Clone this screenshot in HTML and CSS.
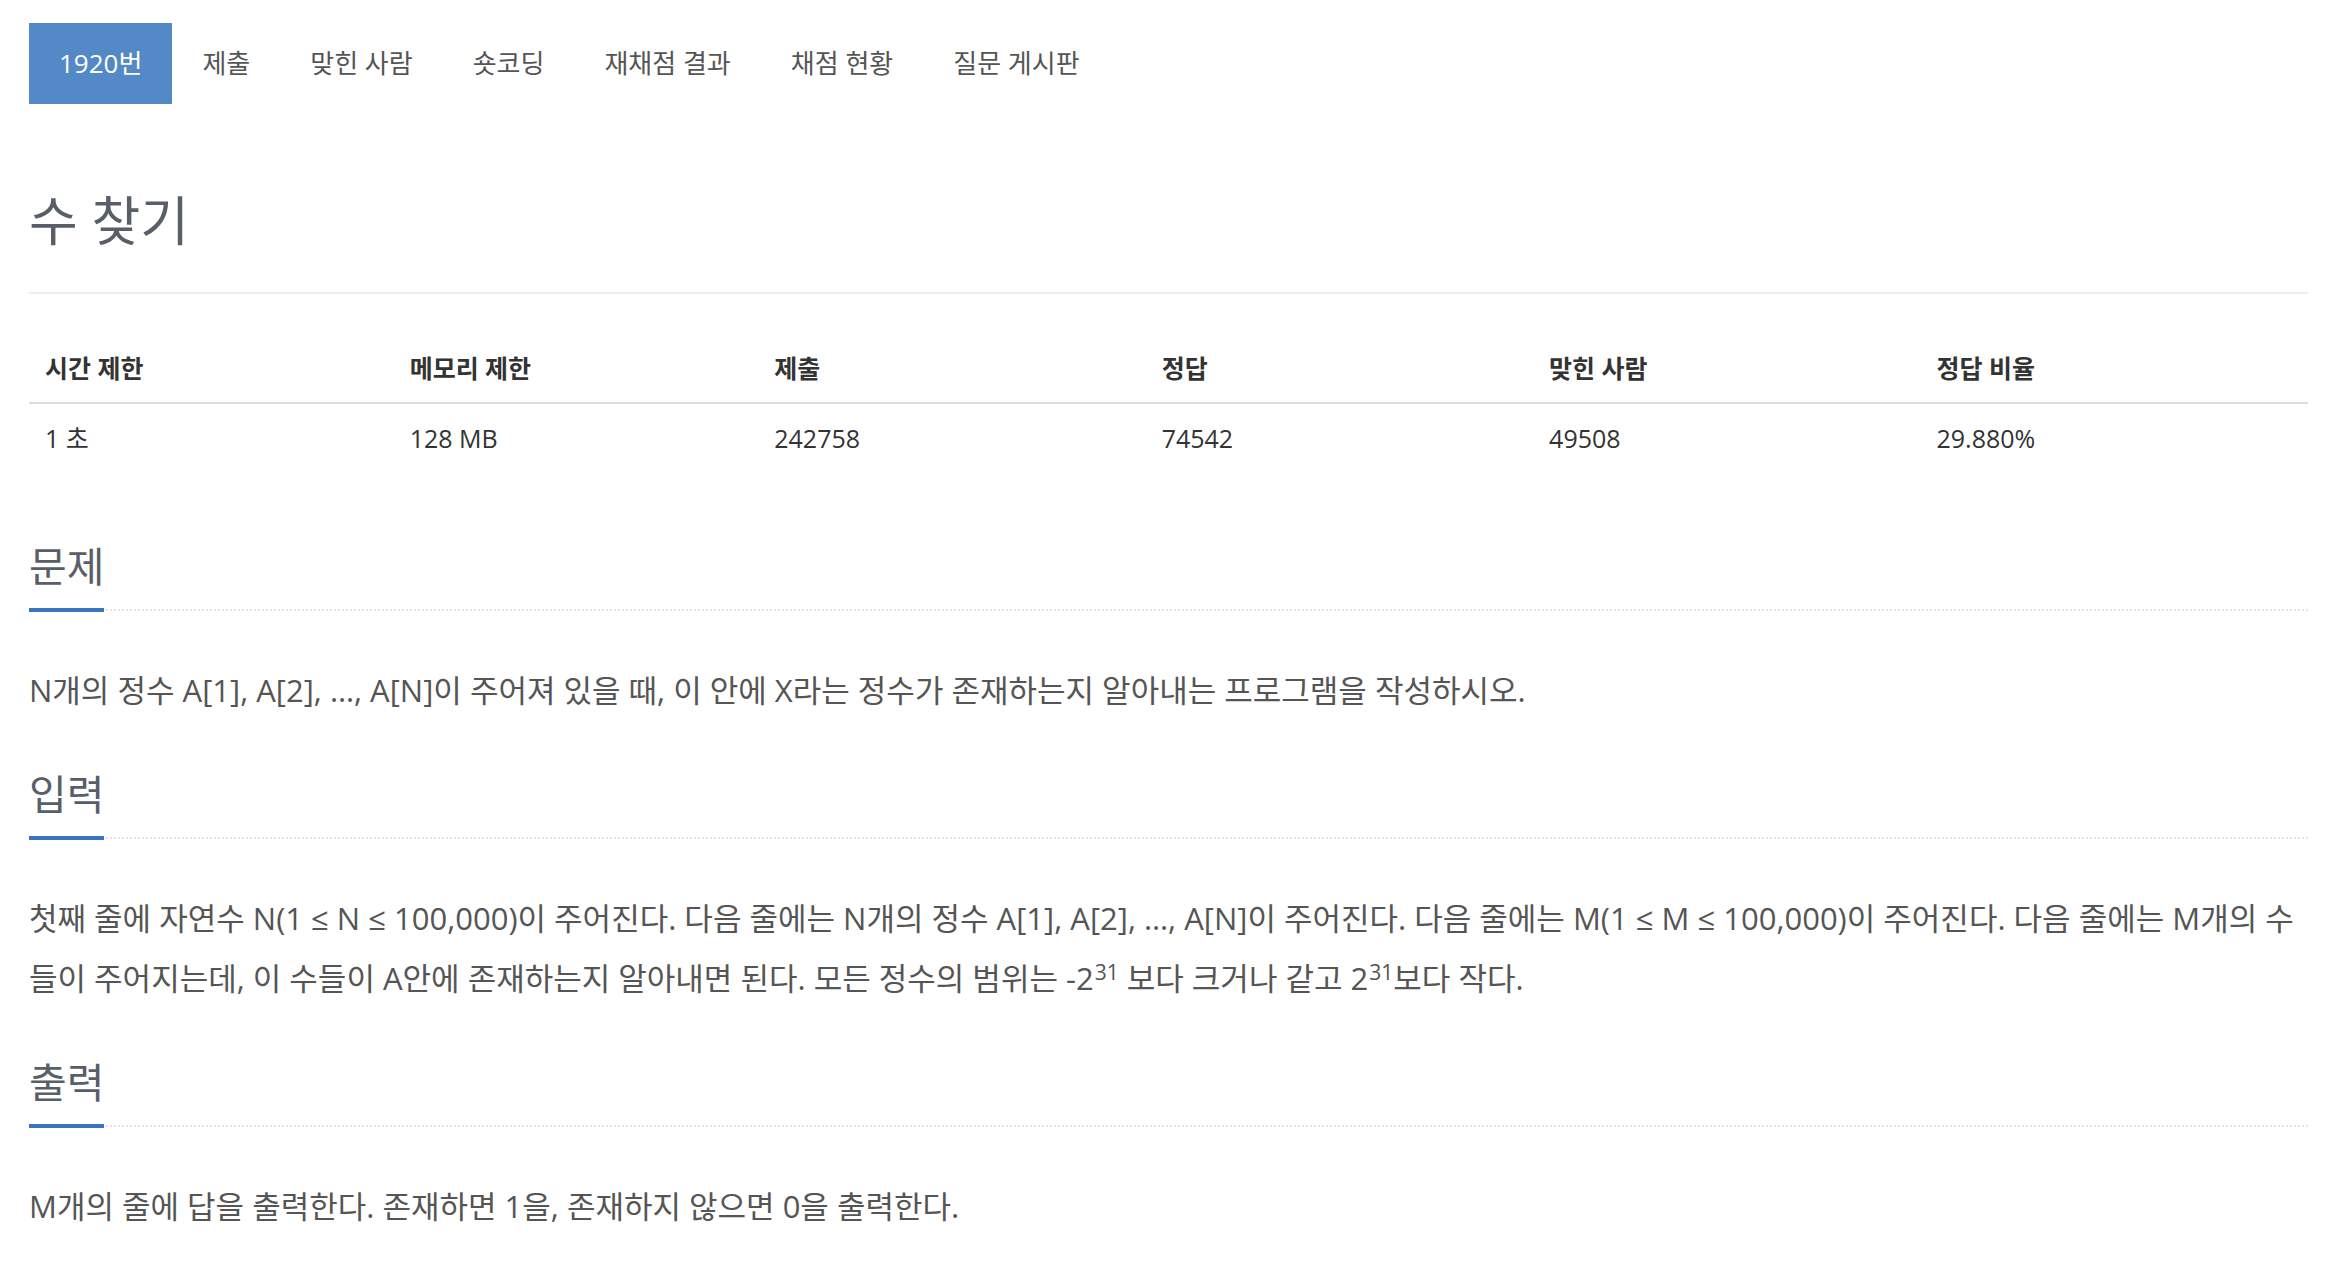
FILE: index.html
```html
<!DOCTYPE html>
<html lang="ko">

<head>
    <meta charset="UTF-8">
    <meta name="viewport" content="width=device-width, initial-scale=1.0">
    <title>1920번: 수 찾기</title>
    <link rel="stylesheet" href="styles.css">
</head>

<body>
    <div class="container">
        <ul class="problem-menu">
            <li class="active"><a href="#">1920번</a></li>
            <li><a href="#">제출</a></li>
            <li><a href="#">맞힌 사람</a></li>
            <li><a href="#">숏코딩</a></li>
            <li><a href="#">재채점 결과</a></li>
            <li><a href="#">채점 현황</a></li>
            <li><a href="#">질문 게시판</a></li>
        </ul>

        <div class="page-header">
            <h1 id="problem_title">수 찾기</h1>
        </div>

        <table id="problem-info">
            <thead>
                <tr>
                    <th class="col-narrow">시간 제한</th>
                    <th class="col-narrow">메모리 제한</th>
                    <th>제출</th>
                    <th>정답</th>
                    <th>맞힌 사람</th>
                    <th>정답 비율</th>
                </tr>
            </thead>
            <tbody>
                <tr>
                    <td>1 초</td>
                    <td>128 MB</td>
                    <td>242758</td>
                    <td>74542</td>
                    <td>49508</td>
                    <td>29.880%</td>
                </tr>
            </tbody>
        </table>

        <section class="problem-section">
            <div class="headline">
                <h2>문제</h2>
            </div>
            <div class="problem-text">
                <p>N개의 정수 A[1], A[2], …, A[N]이 주어져 있을 때, 이 안에 X라는 정수가 존재하는지 알아내는 프로그램을 작성하시오.</p>
            </div>
        </section>

        <section class="problem-section">
            <div class="headline">
                <h2>입력</h2>
            </div>
            <div class="problem-text">
                <p>첫째 줄에 자연수 N(1 ≤ N ≤ 100,000)이 주어진다. 다음 줄에는 N개의 정수 A[1], A[2], …, A[N]이 주어진다. 다음 줄에는 M(1 ≤ M ≤ 100,000)이 주어진다. 다음 줄에는 M개의 수들이 주어지는데, 이 수들이 A안에 존재하는지 알아내면 된다. 모든 정수의 범위는 -2<sup>31</sup> 보다 크거나 같고 2<sup>31</sup>보다 작다.</p>
            </div>
        </section>

        <section class="problem-section">
            <div class="headline">
                <h2>출력</h2>
            </div>
            <div class="problem-text">
                <p>M개의 줄에 답을 출력한다. 존재하면 1을, 존재하지 않으면 0을 출력한다.</p>
            </div>
        </section>
    </div>
</body>

</html>
```

FILE: styles.css
```css
body {
    margin: 0;
    font-family: "Open Sans", "Noto Sans CJK KR", sans-serif;
    color: #333;
    background-color: #fff;
}

.container {
    margin: 0 40px 0 29px;
    padding-top: 23px;
}

/* problem menu */

.problem-menu {
    display: flex;
    list-style: none;
    margin: 0;
    padding: 0;
}

.problem-menu a {
    display: block;
    padding: 23px 30px;
    font-size: 26px;
    line-height: 35px;
    color: #555;
    text-decoration: none;
}

.problem-menu .active a {
    background-color: #5289c6;
    color: #fff;
}

/* title */

.page-header {
    margin-top: 86px;
    padding-bottom: 40px;
    border-bottom: 2px solid #eee;
}

.page-header h1 {
    margin: 0;
    font-size: 53px;
    line-height: 62px;
    font-weight: 400;
    color: #585f69;
}

/* info table */

#problem-info {
    width: 100%;
    margin-top: 40px;
    border-collapse: collapse;
    font-size: 25px;
    line-height: 36px;
    color: #333;
}

#problem-info th,
#problem-info td {
    padding: 16px;
    text-align: left;
}

#problem-info th {
    width: 17%;
    font-weight: 700;
    border-bottom: 2px solid #ddd;
}

#problem-info th.col-narrow {
    width: 16%;
}

/* sections */

.problem-section {
    margin-top: 70px;
}

.problem-section + .problem-section {
    margin-top: 50px;
}

.headline {
    border-bottom: 2px dotted #e2e6ec;
}

.headline h2 {
    display: inline-block;
    margin: 0 0 -3px;
    padding-bottom: 18px;
    font-size: 41px;
    line-height: 48px;
    font-weight: 400;
    color: #585f69;
    border-bottom: 4px solid #3875c0;
}

.problem-text p {
    margin: 49px 0 0;
    font-size: 31px;
    line-height: 60px;
    color: #555;
}

.problem-text sup {
    margin-left: 1px;
    font-size: 21px;
    line-height: 1;
    vertical-align: 10px;
}
```
